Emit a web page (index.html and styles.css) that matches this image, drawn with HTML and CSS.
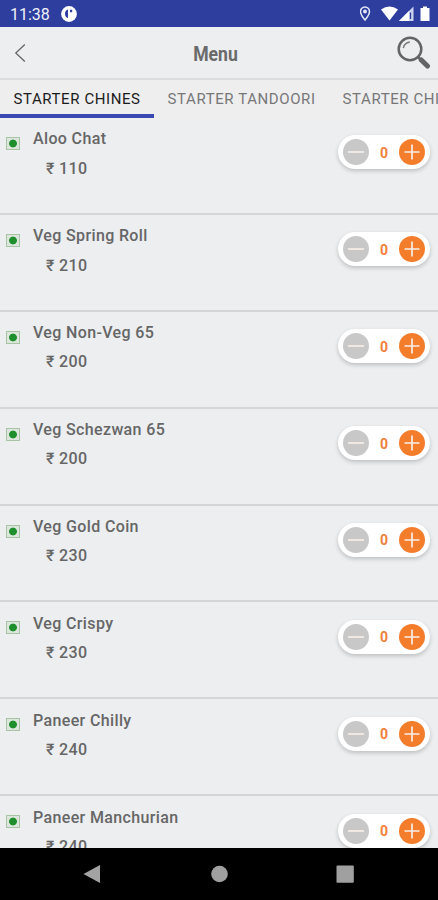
FILE: index.html
```
<!DOCTYPE html>
<html lang="en">

<head>
  <meta charset="UTF-8" />
  <meta name="viewport" content="width=device-width, initial-scale=1.0" />
  <title>Menu</title>
  <link rel="stylesheet" href="styles.css">
</head>

<body>
  <div class="status-bar">
    <span class="time">11:38</span>
    <svg class="app-icon" width="16" height="16" viewBox="0 0 16 16">
      <circle cx="8" cy="8" r="7.9" fill="#fff" />
      <path d="M7 3.500v8.500q-3-.8-3-4.200t3-4.300zM9 3.800h2.200v2.400h-2.200z" fill="#2d3e9e" />
    </svg>
    <svg class="status-icons" width="74" height="18" viewBox="0 0 74 18">
      <path d="M4.500 2a4.500 4.500 0 0 0-4.500 4.500c0 3.200 4.500 8.500 4.500 8.500s4.500-5.300 4.500-8.500a4.500 4.500 0 0 0-4.500-4.500z" transform="translate(0.500 0)" fill="none" stroke="#e6e9f7" stroke-width="1.500" />
      <circle cx="5" cy="6.500" r="1.900" fill="#e6e9f7" />
      <path d="M21 4.600q8.500-6.400 17 0l-8.500 11z" fill="#fff" />
      <path d="M53.500 1.500v14.500h-14.500z" fill="#cdd3ee" />
      <path d="M49 6v10h-10z" fill="#fff" />
      <path d="M50.500 7.500v6.500" stroke="#2d3e9e" stroke-width="1.300" />
      <path d="M63 1.500h4v1.500h2.500v13h-9v-13h2.500z" fill="#fff" />
    </svg>
  </div>

  <header class="toolbar">
    <svg class="back" width="12" height="20" viewBox="0 0 12 20">
      <path d="M10.800 1.500 1.800 10l9 8.500" fill="none" stroke="#666" stroke-width="1.300" />
    </svg>
    <h1>Menu</h1>
    <svg class="search" width="34" height="35" viewBox="0 0 34 35">
      <circle cx="13" cy="14" r="11.300" fill="none" stroke="#646464" stroke-width="2.500" />
      <path d="M6.300 13q1-5 6.500-6" fill="none" stroke="#777" stroke-width="1.400" />
      <path d="M21 22l4 4" stroke="#646464" stroke-width="2.500" />
      <path d="M24.300 25l6.200 6" stroke="#646464" stroke-width="5" stroke-linecap="round" />
    </svg>
  </header>

  <nav class="tabs">
    <a class="tab active">STARTER CHINES</a>
    <a class="tab">STARTER TANDOORI</a>
    <a class="tab">STARTER CHINESE</a>
  </nav>

  <main class="list"></main>

  <footer class="nav-bar">
    <svg width="438" height="52" viewBox="0 0 438 52">
      <path d="M100 17v18l-16.500-9z" fill="#a3a3a3" />
      <circle cx="219.500" cy="26" r="8.300" fill="#a0a0a0" />
      <rect x="336.500" y="17.500" width="17.300" height="17.300" rx="1" fill="#a0a0a0" />
    </svg>
  </footer>

  <script>
    const items = [
      ["Aloo Chat", 110],
      ["Veg Spring Roll", 210],
      ["Veg Non-Veg 65", 200],
      ["Veg Schezwan 65", 200],
      ["Veg Gold Coin", 230],
      ["Veg Crispy", 230],
      ["Paneer Chilly", 240],
      ["Paneer Manchurian", 240],
    ];
    document.querySelector(".list").innerHTML = items
      .map(
        ([name, price]) => `
      <section class="item">
        <span class="veg"></span>
        <div class="info">
          <h2 class="name">${name}</h2>
          <div class="price">₹ ${price}</div>
        </div>
        <div class="stepper">
          <svg class="minus" width="26" height="26" viewBox="0 0 26 26">
            <circle cx="13" cy="13" r="13" />
            <path d="M5 13h16" />
          </svg>
          <span class="count">0</span>
          <svg class="plus" width="26" height="26" viewBox="0 0 26 26">
            <circle cx="13" cy="13" r="13" />
            <path d="M5.500 13h15M13 5.500v15" />
          </svg>
        </div>
      </section>`
      )
      .join("");
    // 加减数量
    document.querySelectorAll(".stepper").forEach((el) => {
      const count = el.querySelector(".count");
      el.querySelector(".plus").onclick = () => {
        count.innerText = count.innerText - 0 + 1;
      };
      el.querySelector(".minus").onclick = () => {
        count.innerText = Math.max(0, count.innerText - 1);
      };
    });
  </script>
</body>

</html>
```
FILE: styles.css
```
* {
  box-sizing: border-box;
}

html,
body {
  height: 100%;
  overflow: hidden;
}

body {
  margin: 0;
  display: flex;
  flex-direction: column;
  background-color: #eceef0;
  color: #666;
  font-family: Roboto, "Liberation Sans", sans-serif;
}

.status-bar {
  height: 27px;
  flex: none;
  display: flex;
  align-items: center;
  padding: 1px 4px 0 10px;
  background-color: #2d3e9e;
  color: #eef0fa;
}

.time {
  width: 51px;
  font-size: 16px;
}

.status-icons {
  margin-left: auto;
}

.toolbar {
  height: 53px;
  flex: none;
  display: flex;
  align-items: center;
  padding: 0 7px 0 14px;
  border-bottom: 2px solid #dcdddf;
}

.toolbar h1 {
  flex: 1;
  margin: 0;
  padding: 2px 0 0 9px;
  text-align: center;
  font-size: 20px;
  font-weight: 700;
  color: #6a6a6a;
  transform: scaleX(0.88);
}

.tabs {
  height: 38px;
  flex: none;
  display: flex;
  overflow: hidden;
  background-color: #eeeeef;
}

.tab {
  flex: none;
  height: 37.500px;
  padding: 0 13.500px;
  font-size: 15px;
  letter-spacing: 0.590px;
  line-height: 38px;
  white-space: nowrap;
  color: #777;
}

.tab.active {
  color: #1c1c1c;
  border-bottom: 4px solid #3a49b1;
}

.list {
  flex: 1;
  min-height: 0;
  overflow: hidden;
}

.item {
  height: 96.900px;
  display: flex;
  align-items: flex-start;
  padding-right: 8px;
  border-bottom: 2px solid #d3d5d7;
}

.veg {
  flex: none;
  width: 14px;
  height: 13px;
  margin: 19px 13px 0 6px;
  border: 1px solid #a9c4a5;
  background: radial-gradient(circle, #1f8e2c 3.500px, #dce6dc 4.300px);
}

.info {
  flex: 1;
}

.name,
.price {
  margin: 0;
  font-size: 16px;
  font-weight: 500;
  letter-spacing: 0.360px;
  line-height: 20px;
}

.name {
  margin-top: 11.400px;
}

.price {
  margin-top: 9.300px;
  padding-left: 13px;
}

.stepper {
  width: 92px;
  height: 34px;
  margin-top: 17.400px;
  padding: 0 5px;
  display: flex;
  align-items: center;
  justify-content: space-between;
  border-radius: 17px;
  background-color: #fff;
  box-shadow: 0 2px 4px rgba(0, 0, 0, 0.200);
}

.stepper path {
  fill: none;
  stroke: #f6eee8;
  stroke-width: 1.700;
}

.minus circle {
  fill: #c8c8c8;
}

.plus circle {
  fill: #f47d2c;
}

.count {
  padding-top: 1px;
  font-size: 14px;
  font-weight: 700;
  color: #f0803c;
}

.nav-bar {
  height: 52px;
  flex: none;
  background-color: #000;
}

.nav-bar svg {
  display: block;
}
```
